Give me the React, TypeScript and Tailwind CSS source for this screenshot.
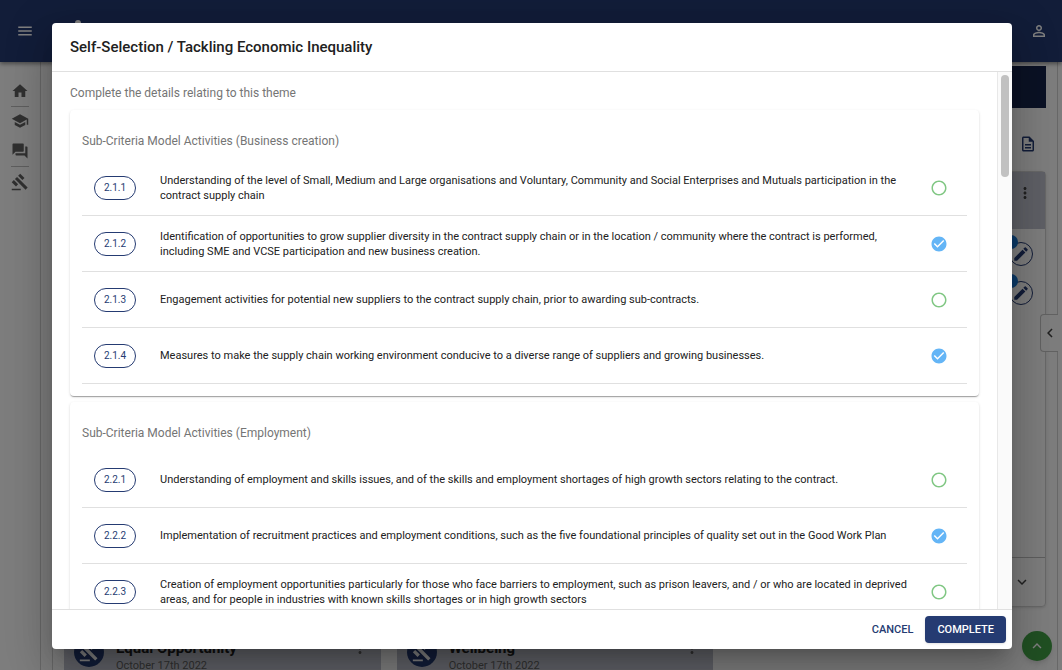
import { useState } from 'react';
import {
  MdCheckCircle,
  MdChevronLeft,
  MdEdit,
  MdGavel,
  MdHome,
  MdKeyboardArrowDown,
  MdKeyboardArrowUp,
  MdMenu,
  MdMoreVert,
  MdOutlineDescription,
  MdPersonOutline,
  MdQuestionAnswer,
  MdRadioButtonUnchecked,
  MdSchool,
} from 'react-icons/md';

interface Activity {
  id: string;
  text: string;
  selected: boolean;
}

interface Section {
  title: string;
  activities: Activity[];
}

const SECTIONS: Section[] = [
  {
    title: 'Sub-Criteria Model Activities (Business creation)',
    activities: [
      {
        id: '2.1.1',
        text: 'Understanding of the level of Small, Medium and Large organisations and Voluntary, Community and Social Enterprises and Mutuals participation in the contract supply chain',
        selected: false,
      },
      {
        id: '2.1.2',
        text: 'Identification of opportunities to grow supplier diversity in the contract supply chain or in the location / community where the contract is performed, including SME and VCSE participation and new business creation.',
        selected: true,
      },
      {
        id: '2.1.3',
        text: 'Engagement activities for potential new suppliers to the contract supply chain, prior to awarding sub-contracts.',
        selected: false,
      },
      {
        id: '2.1.4',
        text: 'Measures to make the supply chain working environment conducive to a diverse range of suppliers and growing businesses.',
        selected: true,
      },
    ],
  },
  {
    title: 'Sub-Criteria Model Activities (Employment)',
    activities: [
      {
        id: '2.2.1',
        text: 'Understanding of employment and skills issues, and of the skills and employment shortages of high growth sectors relating to the contract.',
        selected: false,
      },
      {
        id: '2.2.2',
        text: 'Implementation of recruitment practices and employment conditions, such as the five foundational principles of quality set out in the Good Work Plan',
        selected: true,
      },
      {
        id: '2.2.3',
        text: 'Creation of employment opportunities particularly for those who face barriers to employment, such as prison leavers, and / or who are located in deprived areas, and for people in industries with known skills shortages or in high growth sectors',
        selected: false,
      },
    ],
  },
];

function ActivityRow({ activity }: { activity: Activity }) {
  const [checked, setChecked] = useState(activity.selected);

  return (
    <label className="flex h-14 cursor-pointer items-center gap-3 border-b border-[#e0e0e0] pl-3 pr-[19px]">
      <span className="flex h-6 w-[42px] shrink-0 items-center justify-center rounded-full border border-[#253b72] text-[10px] text-[#253b72]">
        {activity.id}
      </span>
      <span className="flex-1 pl-3 text-[11px] leading-[15px] text-[#212121]">{activity.text}</span>
      <span className="relative size-[18px] shrink-0">
        <input
          type="checkbox"
          checked={checked}
          onChange={(e) => setChecked(e.target.checked)}
          className="block size-[18px] appearance-none"
        />
        {checked ? (
          <MdCheckCircle className="pointer-events-none absolute inset-0 size-[18px] text-[#64b5f6]" />
        ) : (
          <MdRadioButtonUnchecked className="pointer-events-none absolute inset-0 size-[18px] text-[#81c784]" />
        )}
      </span>
    </label>
  );
}

function SectionCard({ section }: { section: Section }) {
  return (
    <section className="rounded bg-white px-3 pb-3 shadow-[0_2px_1px_-1px_rgba(0,0,0,0.2),0_1px_1px_0_rgba(0,0,0,0.14),0_1px_3px_0_rgba(0,0,0,0.12)]">
      <h3 className="pt-5 pb-2 text-[12px] leading-[22px] text-[#757575]">{section.title}</h3>
      {section.activities.map((activity) => (
        <ActivityRow key={activity.id} activity={activity} />
      ))}
    </section>
  );
}

function ThemeCard({ title }: { title: string }) {
  return (
    <article className="flex h-[57px] items-center gap-3 rounded-t bg-[#bfc1cc] pl-[10px] pr-3">
      <span className="flex size-[30px] items-center justify-center rounded-full bg-[#253b72] text-white">
        <MdGavel className="size-5" />
      </span>
      <div className="flex-1 pt-2">
        <h2 className="text-[15px] leading-5 font-bold text-[#212121]">{title}</h2>
        <p className="text-[11px] leading-4 text-[#616161]">October 17th 2022</p>
      </div>
      <button aria-label="More" className="self-start pt-4 text-[#616161]">
        <MdMoreVert className="size-[18px]" />
      </button>
    </article>
  );
}

function EditButton() {
  return (
    <button
      aria-label="Edit"
      className="relative flex size-6 items-center justify-center rounded-full border border-[#253b72] text-[#253b72]"
    >
      <MdEdit className="size-[18px]" />
      <span className="absolute -top-2 -left-1.5 size-3.5 rounded-full bg-[#1976d2]" />
    </button>
  );
}

function Dashboard() {
  return (
    <div className="flex h-full flex-col bg-[#fafafa]">
      <header className="z-10 flex h-[62px] shrink-0 items-center bg-[#253b72] pr-[14px] pl-4 text-white shadow-[0_2px_4px_rgba(0,0,0,0.4)]">
        <button aria-label="Menu">
          <MdMenu className="size-[18px]" />
        </button>
        <svg viewBox="0 0 40 40" className="ml-6 size-10 fill-white" aria-hidden="true">
          <circle cx="20" cy="12" r="3" />
          <path d="M10 32l10-16 10 16z" />
        </svg>
        <button aria-label="Account" className="ml-auto">
          <MdPersonOutline className="size-[18px]" />
        </button>
      </header>

      <div className="flex min-h-0 flex-1">
        <nav className="flex w-[41px] shrink-0 flex-col items-center border-r border-[#d0d0d0] pt-5 text-[#616161]">
          <a href="#home" aria-label="Home" className="border-b border-[#bdbdbd] pb-1.5">
            <MdHome className="size-[18px]" />
          </a>
          <a href="#learning" aria-label="Learning" className="pt-[5px]">
            <MdSchool className="size-[18px]" />
          </a>
          <a href="#messages" aria-label="Messages" className="border-b border-[#bdbdbd] pt-3 pb-1.5">
            <MdQuestionAnswer className="size-[18px]" />
          </a>
          <a href="#contracts" aria-label="Contracts" className="pt-1.5">
            <MdGavel className="size-[18px]" />
          </a>
        </nav>

        <main className="ml-[11px] mr-1 flex min-w-0 flex-1 flex-col border-x border-[#d0d0d0] px-[11px] pt-1">
          <div className="h-[42px] shrink-0 bg-[#17244a]" />
          <div className="flex h-[63px] shrink-0 items-center justify-end pt-2 pr-[9px] text-[#253b72]">
            <MdOutlineDescription className="size-[18px]" />
          </div>
          <div className="grid grid-cols-3 gap-4">
            <article className="col-start-3 flex h-[436px] flex-col rounded border border-[#d0d0d0] shadow-sm">
              <div className="flex h-[57px] justify-end bg-[#bfc1cc] pt-3 pr-[11px] text-[#424242]">
                <MdMoreVert className="size-[18px]" />
              </div>
              <div className="flex flex-1 flex-col items-end gap-[15px] pt-[13px] pr-3">
                <EditButton />
                <EditButton />
              </div>
              <div className="flex h-[49px] items-center justify-end border-t border-[#bdbdbd] pr-[14px] text-[#424242]">
                <MdKeyboardArrowDown className="size-[18px]" />
              </div>
            </article>
            <div className="col-start-1">
              <ThemeCard title="Equal Opportunity" />
            </div>
            <ThemeCard title="Wellbeing" />
          </div>
        </main>
      </div>

      {/* Floating controls */}
      <button
        aria-label="Open panel"
        className="absolute top-[314px] right-1 flex h-[38px] w-[18px] items-center justify-center rounded-l border border-r-0 border-[#c4c4c4] bg-[#fafafa] text-[#424242]"
      >
        <MdChevronLeft className="size-[18px] shrink-0" />
      </button>
      <button
        aria-label="Back to top"
        className="absolute right-[10px] bottom-[9px] flex size-[30px] items-center justify-center rounded-full bg-[#43a047] text-white shadow-md"
      >
        <MdKeyboardArrowUp className="size-[18px]" />
      </button>
    </div>
  );
}

function SelectionDialog() {
  return (
    <div
      role="dialog"
      aria-modal="true"
      aria-labelledby="dialog-title"
      className="flex h-full w-full max-w-[960px] flex-col overflow-hidden rounded bg-white shadow-[0_11px_15px_-7px_rgba(0,0,0,0.2),0_24px_38px_3px_rgba(0,0,0,0.14),0_9px_46px_8px_rgba(0,0,0,0.12)]"
    >
      <h1 id="dialog-title" className="shrink-0 px-[18px] py-3 text-[15px] leading-6 font-medium text-[#212121]">
        Self-Selection / Tackling Economic Inequality
      </h1>

      <div className="flex min-h-0 flex-1 border-y border-[#e0e0e0]">
        <div className="flex min-w-0 flex-1 flex-col gap-1.5 overflow-y-auto px-[18px] [scrollbar-width:none]">
          <p className="pt-[11px] pb-px text-[12px] leading-5 text-[#757575]">
            Complete the details relating to this theme
          </p>
          {SECTIONS.map((section) => (
            <SectionCard key={section.title} section={section} />
          ))}
        </div>
        <div className="w-[15px] shrink-0 border-l border-[#e8e8e8] bg-[#fafafa] px-[3px] pt-[3px]">
          <div className="h-[102px] rounded-full bg-[#c1c1c1]" />
        </div>
      </div>

      <div className="flex shrink-0 items-center justify-end gap-3 p-1.5 text-[11px] leading-[17px] font-medium">
        <button className="text-[#253b72]">CANCEL</button>
        <button className="rounded bg-[#253b72] px-3 py-[5px] text-white shadow">COMPLETE</button>
      </div>
    </div>
  );
}

export default function App() {
  return (
    <div className="relative h-screen overflow-hidden font-[Roboto,sans-serif]">
      <Dashboard />
      <div className="absolute inset-0 z-20 flex justify-center bg-black/50 pt-[23px] pb-[21px] pl-0.5">
        <SelectionDialog />
      </div>
    </div>
  );
}
